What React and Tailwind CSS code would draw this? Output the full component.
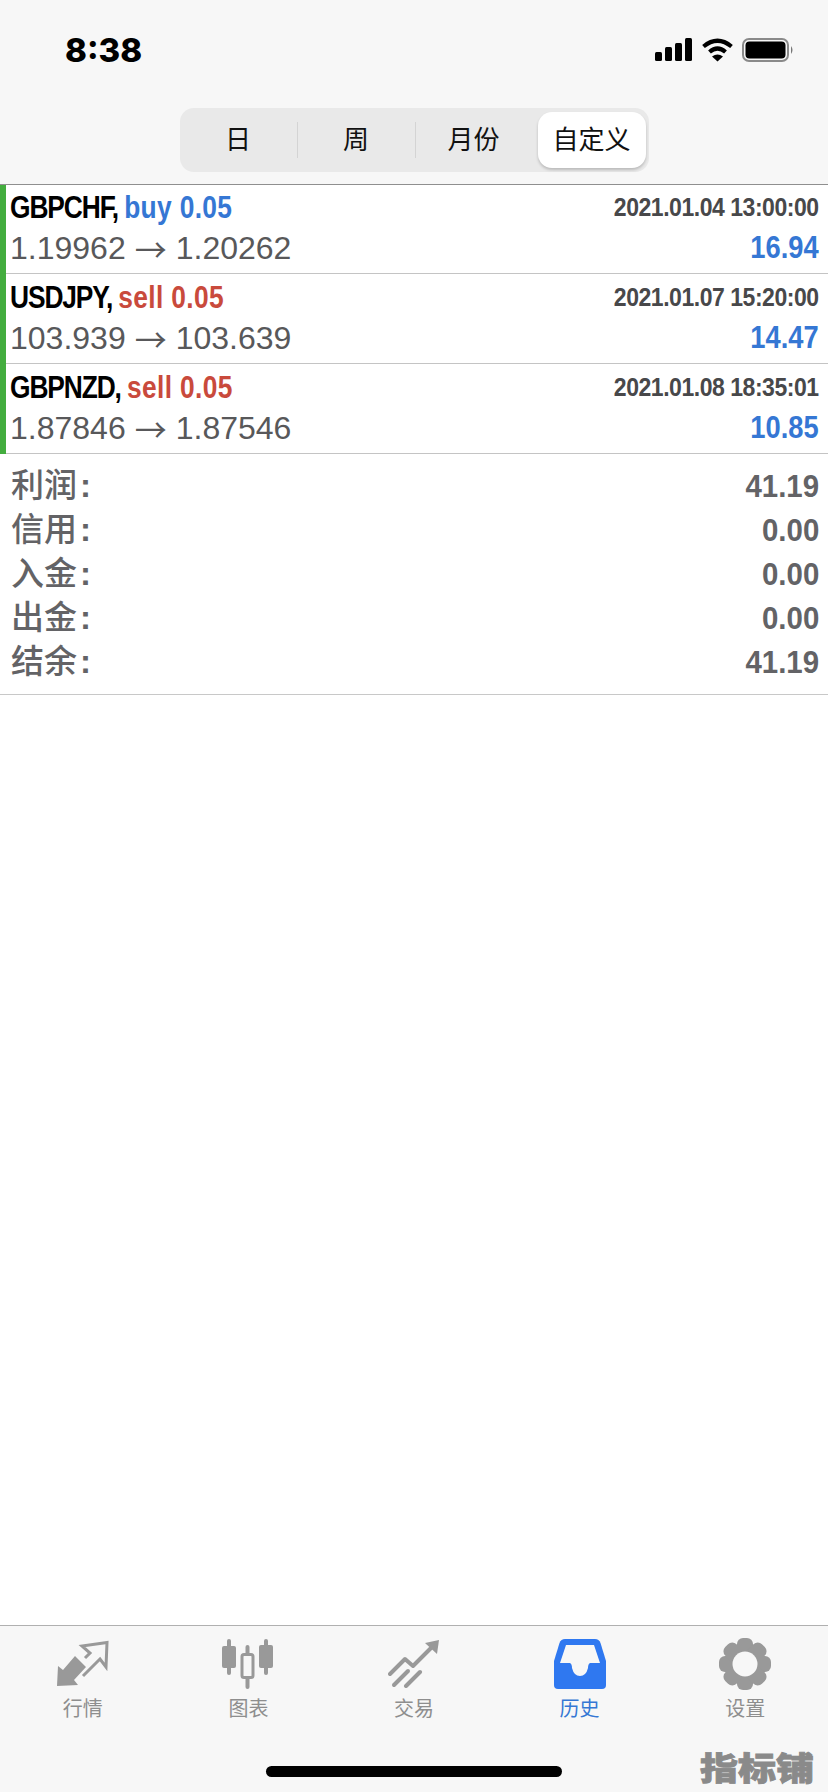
import React from "react";

const SANS = "font-['Liberation_Sans','Noto_Sans_CJK_SC',sans-serif]";

const trades = [
	{ pair: "GBPCHF,", side: "buy 0.05", sideColor: "text-[#3577d4]", time: "2021.01.04 13:00:00", from: "1.19962", to: "1.20262", profit: "16.94" },
	{ pair: "USDJPY,", side: "sell 0.05", sideColor: "text-[#c94a3c]", time: "2021.01.07 15:20:00", from: "103.939", to: "103.639", profit: "14.47" },
	{ pair: "GBPNZD,", side: "sell 0.05", sideColor: "text-[#c94a3c]", time: "2021.01.08 18:35:01", from: "1.87846", to: "1.87546", profit: "10.85" },
];

const totals = [
	{ label: "利润", value: "41.19" },
	{ label: "信用", value: "0.00" },
	{ label: "入金", value: "0.00" },
	{ label: "出金", value: "0.00" },
	{ label: "结余", value: "41.19" },
];

function QuotesIcon() {
	return (
		<svg width="52" height="48" viewBox="0 0 52 48">
			<path d="M0 46 L1 26 L6 30 L18 16 L29 27 L17 40 L21 45 Z" fill="#999999" />
			<path d="M26 36 L43 19 L49 27 L50 2.5 L25 6 L33 13 L28 18" fill="none" stroke="#999999" strokeWidth="3" />
		</svg>
	);
}

function ChartIcon() {
	return (
		<svg width="52" height="50" viewBox="0 0 52 50" fill="#999999">
			<rect x="5" y="0" width="4" height="36" rx="2" />
			<rect x="0" y="7" width="14" height="22" rx="2" />
			<rect x="23.5" y="6" width="4" height="44" rx="2" />
			<rect x="20" y="15.5" width="11" height="23" rx="2" fill="#f7f7f7" stroke="#999999" strokeWidth="3" />
			<rect x="42" y="0" width="4" height="36" rx="2" />
			<rect x="37" y="6" width="14" height="23" rx="2" />
		</svg>
	);
}

function TradeIcon() {
	return (
		<svg width="52" height="48" viewBox="0 0 52 48" fill="none" stroke="#999999" strokeWidth="4" strokeLinecap="round">
			<path d="M47 4 L25 26 L17 19 L2 34" strokeLinejoin="round" />
			<path d="M6 45 L20 31" />
			<path d="M18 46 L32 32" />
			<path d="M37 3 L51 0 L49 14 Z" fill="#999999" stroke="none" />
		</svg>
	);
}

function HistoryIcon() {
	return (
		<svg width="52" height="50" viewBox="0 0 52 50">
			<path
				d="M11 0 H41 Q45 0 46.5 4 L52 22 V46 Q52 50 48 50 H4 Q0 50 0 46 V22 L5.5 4 Q7 0 11 0 Z"
				fill="#2f78f0"
			/>
			<path
				d="M12 6 H40 L46 24 H36 Q34 25 34 29 Q32 37 26 37 Q20 37 18 29 Q18 25 16 24 H6 Z"
				fill="#f7f7f7"
			/>
		</svg>
	);
}

function GearIcon() {
	return (
		<svg width="52" height="52" viewBox="0 0 52 52" fill="#999999">
			<circle cx="26" cy="26" r="20" />
			<rect x="18" y="0" width="16" height="52" rx="6" />
			<rect x="18" y="0" width="16" height="52" rx="6" transform="rotate(45 26 26)" />
			<rect x="18" y="0" width="16" height="52" rx="6" transform="rotate(90 26 26)" />
			<rect x="18" y="0" width="16" height="52" rx="6" transform="rotate(135 26 26)" />
			<circle cx="26" cy="26" r="12.5" fill="#f7f7f7" />
		</svg>
	);
}

const tabs = [
	{ label: "行情", icon: <QuotesIcon />, active: false },
	{ label: "图表", icon: <ChartIcon />, active: false },
	{ label: "交易", icon: <TradeIcon />, active: false },
	{ label: "历史", icon: <HistoryIcon />, active: true },
	{ label: "设置", icon: <GearIcon />, active: false },
];

export default function App() {
	return (
		<div className={`${SANS} w-[828px] h-[1792px] bg-white flex flex-col overflow-hidden`}>
			{/* status bar + segmented control */}
			<div className="h-[185px] bg-[#f7f7f7] border-b border-[#8f8f8f] flex flex-col">
				<div className="h-[108px] flex justify-between items-start pl-[65px] pr-[34px] pt-[30px]">
					<span className="text-[33px] leading-[40px] font-extrabold text-black font-['Inter',sans-serif]">8:38</span>
					<div className="flex items-center gap-[10px] pt-[8px]">
						<svg width="37" height="24" viewBox="0 0 37 24" fill="#000">
							<rect x="0" y="14" width="7" height="9" rx="1.5" />
							<rect x="10" y="9" width="7" height="14" rx="1.5" />
							<rect x="20" y="5" width="7" height="18" rx="1.5" />
							<rect x="30" y="0" width="7" height="23" rx="1.5" />
						</svg>
						<svg width="31" height="24" viewBox="0 0 31 24" fill="none" stroke="#000" strokeWidth="4.2">
							<path d="M1.5 8.5 Q15.5 -3 29.5 8.5" />
							<path d="M7.5 14 Q15.5 7 23.5 14" />
							<path d="M15.5 23.5 L10 18.5 Q15.5 14.5 21 18.5 Z" fill="#000" stroke="none" />
						</svg>
						<svg width="52" height="24" viewBox="0 0 52 24" className="-ml-px">
							<rect x="1" y="1" width="45" height="22" rx="6" fill="none" stroke="#8a8a8a" strokeWidth="2" />
							<rect x="3.5" y="3.5" width="40" height="17" rx="4" fill="#000" />
							<path d="M49 8 Q52 12 49 16 Z" fill="#777777" />
						</svg>
					</div>
				</div>
				<div className="flex justify-center">
					<div className="w-[469px] h-[64px] rounded-[14px] bg-[#e9e9e9] flex items-center text-[26px] text-[#111]">
						<div className="w-[117px] text-center">日</div>
						<div className="w-px h-[36px] bg-[#d4d4d4]" />
						<div className="w-[117px] text-center">周</div>
						<div className="w-px h-[36px] bg-[#d4d4d4]" />
						<div className="w-[122px] text-center pr-[6px]">月份</div>
						<div className="w-[108px] h-[56px] rounded-[14px] bg-white shadow-[0_2px_3px_rgba(0,0,0,0.2)] flex items-center justify-center">
							自定义
						</div>
					</div>
				</div>
			</div>

			{/* trades */}
			<div className="border-l-[6px] border-[#43ad3e]">
				{trades.map((t) => (
					<div key={t.time} className="h-[90px] first:h-[89px] pl-[4px] pr-[9px] pt-[4px] first:pt-[3px] border-b border-[#c4c4c4]">
						<div className="flex justify-between items-center h-[40px]">
							<div className="text-[31px] font-bold scale-x-[0.85] origin-left whitespace-nowrap">
								<span className="text-black tracking-[-1.3px]">{t.pair} </span>
								<span className={`${t.sideColor} tracking-[0.4px]`}>{t.side}</span>
							</div>
							<div className="text-[25px] font-bold tracking-[-0.5px] scale-x-[0.92] origin-right whitespace-nowrap text-[#48484a]">{t.time}</div>
						</div>
						<div className="flex justify-between items-center h-[40px]">
							<div className="text-[32px] text-[#58585a] whitespace-nowrap flex items-center">
								<span>{t.from}</span>
								<span className="mx-[9px] font-['Noto_Sans_CJK_SC',sans-serif] leading-[36px]">→</span>
								<span>{t.to}</span>
							</div>
							<div className="text-[31px] font-bold scale-x-[0.88] origin-right text-[#3577d4]">{t.profit}</div>
						</div>
					</div>
				))}
			</div>

			{/* totals */}
			<div className="h-[241px] pt-[10px] pl-[11px] pr-[9px] border-b border-[#c8c8c8] text-[#636366]">
				{totals.map((row) => (
					<div key={row.label} className="h-[44px] flex justify-between items-center">
						<span className="text-[33px] font-medium">
							{row.label}
							<span className="ml-[3px] font-bold">:</span>
						</span>
						<span className="text-[32px] font-bold scale-x-[0.92] origin-right">{row.value}</span>
					</div>
				))}
			</div>

			<div className="flex-1" />

			{/* tab bar */}
			<div className="h-[167px] bg-[#f7f7f7] border-t border-[#b0b0b0] relative">
				<div className="flex pt-[12px]">
					{tabs.map((tab) => (
						<div key={tab.label} className="w-[165.6px] flex flex-col items-center">
							<div className="h-[52px] flex items-center justify-center">{tab.icon}</div>
							<div className={`mt-[6px] text-[20px] leading-[26px] ${tab.active ? "text-[#3577d4]" : "text-[#8e8e8e]"}`}>
								{tab.label}
							</div>
						</div>
					))}
				</div>
				<div className="absolute left-[266px] top-[140px] w-[296px] h-[11px] rounded-full bg-black" />
				<div className="absolute right-[14px] top-[124px] text-[38px] leading-[38px] font-black scale-y-[0.85] text-[#8a8a8a] [-webkit-text-stroke:1px_#8a8a8a]">
					指标铺
				</div>
			</div>
		</div>
	);
}
